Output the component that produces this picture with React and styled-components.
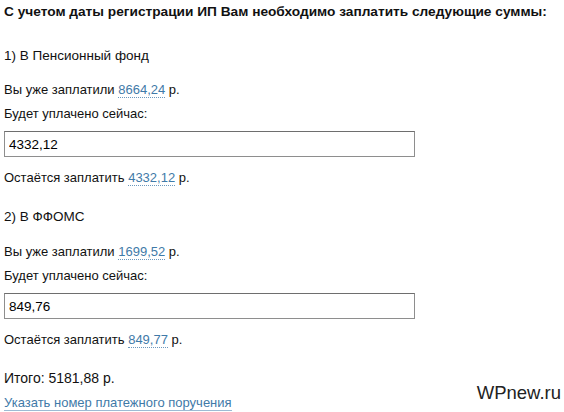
import React from "react";
import styled, { createGlobalStyle } from "styled-components";

const Global = createGlobalStyle`
  html, body { margin: 0; padding: 0; background: #fff; }
  body { font-family: "Liberation Sans", Arial, sans-serif; color: #111; }
`;

const Page = styled.div`
  position: relative;
  width: 564px;
  height: 412px;
  padding: 4px 4px 0 4px;
  box-sizing: border-box;
  overflow: hidden;
`;

const Heading = styled.div`
  font-size: 13.7px;
  font-weight: bold;
  line-height: 16px;
  white-space: nowrap;
  margin: 0 0 27px;
`;

const Section = styled.div`
  font-size: 13.5px;
  line-height: 17px;
  margin: ${(p) => p.$mt}px 0 0;
`;

const Line = styled.div`
  font-size: 13px;
  line-height: 15px;
  margin-top: ${(p) => p.$mt}px;
`;

const Amount = styled.span`
  color: #3f7aa8;
  border-bottom: 1px dotted #6c98bd;
`;

const Field = styled.input`
  display: block;
  box-sizing: border-box;
  width: 411px;
  height: 26px;
  margin-top: ${(p) => p.$mt}px;
  padding: 0 4px;
  border: 1px solid #8e8e8e;
  border-top-color: #6e6e6e;
  font-family: "Liberation Sans", Arial, sans-serif;
  font-size: 13.5px;
  color: #000;
  outline: none;
`;

const Total = styled.div`
  font-size: 14px;
  line-height: 16px;
  margin-top: ${(p) => p.$mt}px;
`;

const Link = styled.a`
  display: inline-block;
  margin-top: ${(p) => p.$mt}px;
  font-size: 13px;
  line-height: 15px;
  color: #3f7aa8;
  text-decoration: none;
  border-bottom: 1px solid #9dbbd4;
`;

const Watermark = styled.div`
  position: absolute;
  right: 3px;
  bottom: 8px;
  font-size: 18.5px;
  color: #222;
  font-family: "Liberation Sans", Arial, sans-serif;
`;

function Block({ title, paid, now, left, first }) {
  return (
    <>
      <Section $mt={first ? 0 : 23}>{title}</Section>
      <Line $mt={first ? 18 : 19}>
        Вы уже заплатили <Amount>{paid}</Amount> р.
      </Line>
      <Line $mt={9}>Будет уплачено сейчас:</Line>
      <Field $mt={10} defaultValue={now} />
      <Line $mt={13}>
        Остаётся заплатить <Amount>{left}</Amount> р.
      </Line>
    </>
  );
}

export default function App() {
  return (
    <>
      <Global />
      <Page>
        <Heading>С учетом даты регистрации ИП Вам необходимо заплатить следующие суммы:</Heading>
        <Block first title="1) В Пенсионный фонд" paid="8664,24" now="4332,12" left="4332,12" />
        <Block title="2) В ФФОМС" paid="1699,52" now="849,76" left="849,77" />
        <Total $mt={23}>Итого: 5181,88 р.</Total>
        <Link $mt={9} href="#">Указать номер платежного поручения</Link>
        <Watermark>WPnew.ru</Watermark>
      </Page>
    </>
  );
}
